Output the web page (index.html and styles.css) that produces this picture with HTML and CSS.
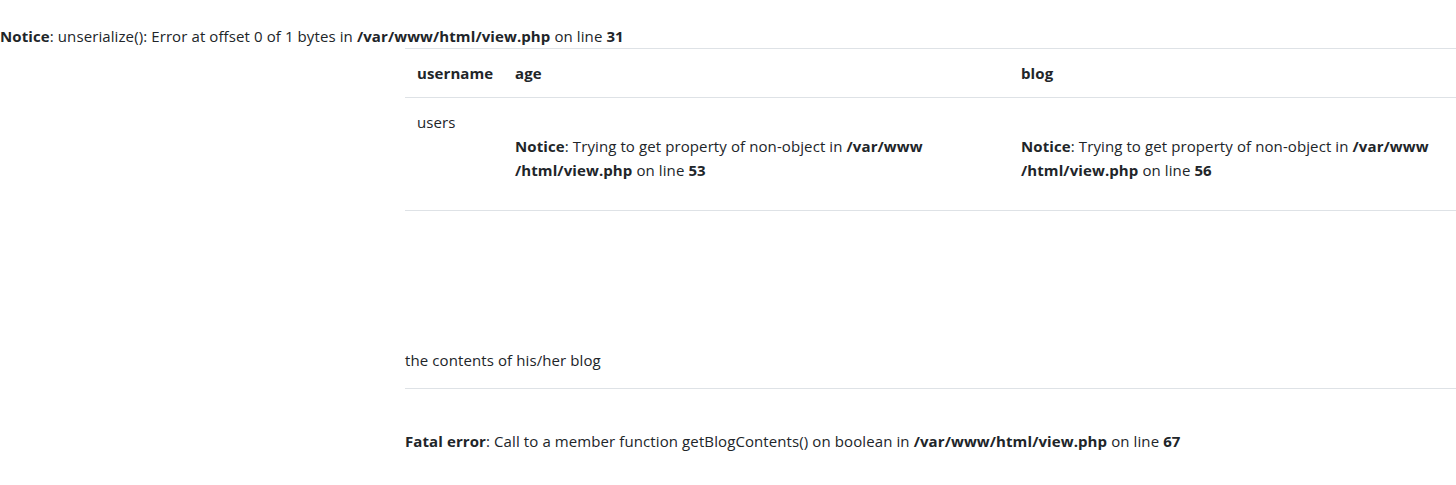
FILE: index.html
```html
<!DOCTYPE html>
<html>
<head>
<meta charset="utf-8">
<title>view</title>
<link rel="stylesheet" href="styles.css">
</head>
<body>
<br>
<b>Notice</b>: unserialize(): Error at offset 0 of 1 bytes in <b>/var/www/html/view.php</b> on line <b>31</b><br>
<div class="container">
  <table class="table">
    <colgroup>
      <col class="c-user">
      <col class="c-age">
      <col class="c-blog">
    </colgroup>
    <thead>
      <tr>
        <th>username</th>
        <th>age</th>
        <th>blog</th>
      </tr>
    </thead>
    <tbody>
      <tr>
        <td>users</td>
        <td class="err-cell"><br><b>Notice</b>: Trying to get property of non-object in <b>/var/www<br>/html/view.php</b> on line <b>53</b></td>
        <td class="err-cell"><br><b>Notice</b>: Trying to get property of non-object in <b>/var/www<br>/html/view.php</b> on line <b>56</b></td>
      </tr>
    </tbody>
  </table>
  <div class="contents">
    <p class="blog-text">the contents of his/her blog</p>
    <hr class="divider">
    <br>
    <b>Fatal error</b>: Call to a member function getBlogContents() on boolean in <b>/var/www/html/view.php</b> on line <b>67</b><br>
  </div>
</div>
</body>
</html>
```
FILE: styles.css
```css
html, body {
  margin: 0;
  padding: 0;
  background: #fff;
}
body {
  font-family: "Open Sans", "Noto Sans", sans-serif;
  font-size: 15px;
  letter-spacing: 0.1px;
  line-height: 24px;
  color: #212529;
  overflow: hidden;
}
b {
  font-weight: 700;
}
.container {
  margin-left: 405px;
}
.table {
  width: 100%;
  border-collapse: collapse;
  table-layout: fixed;
  margin-bottom: 16px;
  border-bottom: 1px solid #dee2e6;
}
.c-user { width: 98px; }
.c-age { width: 506px; }
.table th,
.table td {
  padding: 12px;
  text-align: left;
  vertical-align: top;
  border-top: 1px solid #dee2e6;
}
.table th {
  font-weight: 700;
}
.table td {
  padding-bottom: 28px;
}
.contents {
  padding-top: 121px;
}
.blog-text {
  margin: 0;
}
.divider {
  margin: 16px 0;
  border: 0;
  border-top: 1px solid #dee2e6;
  height: 0;
}
```
